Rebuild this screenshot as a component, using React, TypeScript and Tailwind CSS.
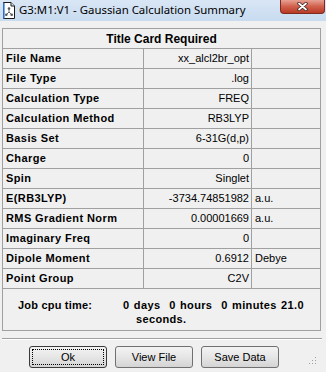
const rows: { label: string; value: string; unit?: string }[] = [
  { label: "File Name", value: "xx_alcl2br_opt" },
  { label: "File Type", value: ".log" },
  { label: "Calculation Type", value: "FREQ" },
  { label: "Calculation Method", value: "RB3LYP" },
  { label: "Basis Set", value: "6-31G(d,p)" },
  { label: "Charge", value: "0" },
  { label: "Spin", value: "Singlet" },
  { label: "E(RB3LYP)", value: "-3734.74851982", unit: "a.u." },
  { label: "RMS Gradient Norm", value: "0.00001669", unit: "a.u." },
  { label: "Imaginary Freq", value: "0" },
  { label: "Dipole Moment", value: "0.6912", unit: "Debye" },
  { label: "Point Group", value: "C2V" },
];

function DocIcon() {
  return (
    <svg width="14" height="17" viewBox="0 0 14 17" className="shrink-0">
      <path d="M1.5 0.5 H9 L12.5 4 V16.5 H1.5 Z" fill="#ffffff" stroke="#1a1a1a" />
      <path d="M9 0.5 V4 H12.5" fill="#dfe8f3" stroke="#1a1a1a" />
      <rect x="1" y="1" width="1.6" height="15.5" fill="#2a6fd0" />
      <g stroke="#6b6b6b" strokeWidth="1" fill="none">
        <path d="M7 7 L7 10 M7 10 L4.5 12.5 M7 10 L9.5 12.5" />
      </g>
      <circle cx="7" cy="6.5" r="1.3" fill="#555" />
      <circle cx="4.3" cy="12.8" r="1.3" fill="#555" />
      <circle cx="9.7" cy="12.8" r="1.3" fill="#555" />
    </svg>
  );
}

function CloseButton() {
  return (
    <div className="ml-auto mr-[1px] w-[45px] h-[14px] rounded-b-[4px] border border-t-0 border-[#7e2a1f] bg-gradient-to-b from-[#e7a093] via-[#d0604c] to-[#b83a24] flex items-center justify-center">
      <svg width="11" height="9" viewBox="0 0 11 9">
        <path d="M2 1.5 L9 7.5 M9 1.5 L2 7.5" stroke="#3b2320" strokeWidth="3.4" strokeLinecap="round" />
        <path d="M2 1.5 L9 7.5 M9 1.5 L2 7.5" stroke="#ffffff" strokeWidth="1.8" strokeLinecap="round" />
      </svg>
    </div>
  );
}

function Btn({ label, focused }: { label: string; focused?: boolean }) {
  return (
    <button
      className={
        "relative w-[78px] h-[22px] rounded-[3px] border bg-gradient-to-b from-[#f3f3f3] via-[#e6e6e6] to-[#d4d4d4] text-[11px] text-black " +
        (focused ? "border-[#3a3a3a]" : "border-[#707070]")
      }
    >
      {focused && <span className="absolute inset-[2px] border border-dotted border-black" />}
      {label}
    </button>
  );
}

function Grip() {
  return (
    <svg width="8" height="8" viewBox="0 0 8 8" className="absolute right-[9px] bottom-[7px]">
      {[
        [6, 0],
        [6, 3],
        [3, 3],
        [6, 6],
        [3, 6],
        [0, 6],
      ].map(([x, y], i) => (
        <rect key={i} x={x} y={y} width="1" height="1" fill="#a0a0a0" />
      ))}
    </svg>
  );
}

export default function App() {
  return (
    <div
      className="relative w-[326px] h-[372px] bg-[#f0f0f0] flex flex-col overflow-hidden"
      style={{ fontFamily: '"Liberation Sans", Arial, sans-serif' }}
    >
      <div className="h-[21px] shrink-0 flex items-start bg-gradient-to-b from-[#d9e6f5] to-[#c8dbf0]">
        <div className="pl-[2px] pt-[2px]">
          <DocIcon />
        </div>
        <span
          className="ml-[3px] mt-[2px] text-[11.4px] leading-[16px] text-black whitespace-nowrap"
          style={{ fontFamily: '"Noto Sans", "Open Sans", sans-serif' }}
        >
          G3:M1:V1 - Gaussian Calculation Summary
        </span>
        <CloseButton />
      </div>

      <div className="mt-[7px] ml-[2px] w-[319px] border border-[#a0a0a0] text-[11px] text-black">
        <div className="h-[20px] border-b border-[#a0a0a0] flex items-center justify-center font-bold text-[12px]">
          Title Card Required
        </div>
        {rows.map((r) => (
          <div key={r.label} className="grid grid-cols-[141px_108px_1fr] h-[20px] border-b border-[#a0a0a0]">
            <div className="border-r border-[#a0a0a0] pl-[3px] flex items-center font-bold tracking-[0.4px] whitespace-nowrap">
              {r.label}
            </div>
            <div className="border-r border-[#a0a0a0] pr-[2px] flex items-center justify-end whitespace-nowrap">
              {r.value}
            </div>
            <div className="pl-[3px] flex items-center whitespace-nowrap">{r.unit ?? ""}</div>
          </div>
        ))}
        <div className="h-[41px] flex pt-[9px] font-bold leading-[14px]">
          <div className="pl-[15px] w-[120px] tracking-[0.2px]">Job cpu time:</div>
          <div className="tracking-[0.35px] [word-spacing:1px]">
            <div className="whitespace-pre">0 days  0 hours  0 minutes 21.0</div>
            <div className="pl-[13px]">seconds.</div>
          </div>
        </div>
      </div>

      <div className="mt-[7px] ml-[2px] w-[320px] h-[2px] border-t border-[#a0a0a0] border-b border-b-white" />

      <div className="mt-[6px] flex gap-[8px] pl-[29px]">
        <Btn label="Ok" focused />
        <Btn label="View File" />
        <Btn label="Save Data" />
      </div>
      <Grip />
    </div>
  );
}
